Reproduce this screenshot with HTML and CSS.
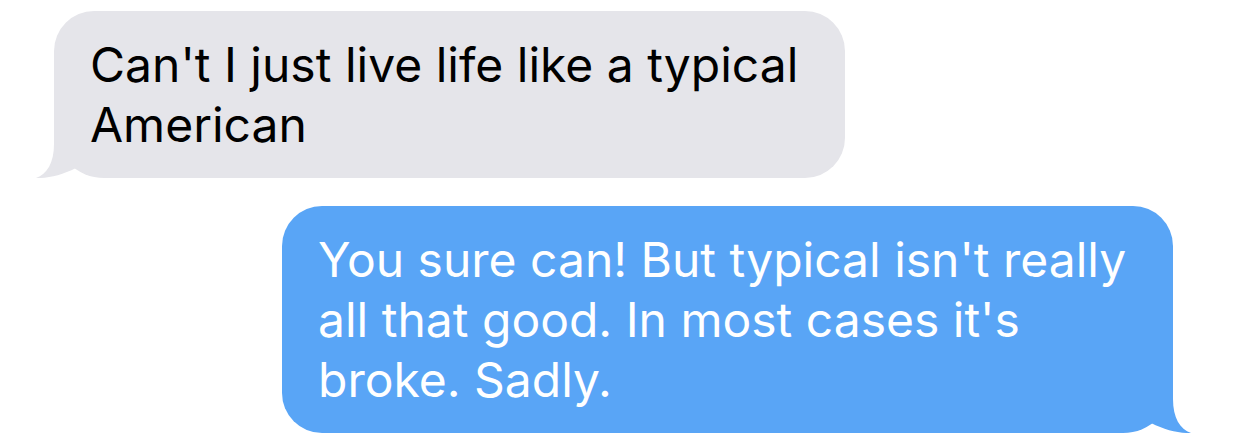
FILE: index.html
```html
<!DOCTYPE html>
<html lang="en">
<head>
<meta charset="utf-8">
<title>Messages</title>
<link rel="stylesheet" href="styles.css">
</head>
<body>
<main class="thread">
  <div class="bubble them">
    <p class="text">Can't I just live life like a typical<br>American</p>
    <svg class="tail" viewBox="-20 -60 50 60" width="50" height="60" aria-hidden="true">
      <path d="M0,-60 L0,-34 C0,-15 -7,-4 -18,0 C-6,0.5 8,-3 22,-10 L22,-60 Z"/>
    </svg>
  </div>
  <div class="bubble me">
    <p class="text">You sure can! But typical isn't really<br>all that good. In most cases it's<br>broke. Sadly.</p>
    <svg class="tail" viewBox="-20 -60 50 60" width="50" height="60" aria-hidden="true">
      <path d="M0,-60 L0,-34 C0,-15 -7,-4 -18,0 C-6,0.5 8,-3 22,-10 L22,-60 Z"/>
    </svg>
  </div>
</main>
</body>
</html>
```

FILE: styles.css
```css
html, body {
  margin: 0;
  padding: 0;
  background: #ffffff;
}

.thread {
  display: flex;
  flex-direction: column;
  gap: 28px;
  padding-top: 11px;
  font-family: Inter, "Noto Sans", sans-serif;
}

.bubble {
  position: relative;
  box-sizing: border-box;
  padding: 23.5px 36px;
  border-radius: 40px;
}

.text {
  margin: 0;
  font-size: 48px;
  line-height: 60px;
  letter-spacing: 0;
  white-space: nowrap;
}

.them {
  align-self: flex-start;
  margin-left: 54px;
  width: 791px;
  background: #e5e5ea;
  color: #000000;
  border-bottom-left-radius: 50px;
}

.me {
  align-self: flex-end;
  margin-right: 61px;
  width: 891px;
  background: #59a5f6;
  color: #ffffff;
  border-bottom-right-radius: 50px;
}

.tail {
  position: absolute;
  bottom: 0;
  display: block;
}

.them .tail {
  left: -20px;
  fill: #e5e5ea;
}

.me .tail {
  right: -20px;
  fill: #59a5f6;
  transform: scaleX(-1);
}
```
